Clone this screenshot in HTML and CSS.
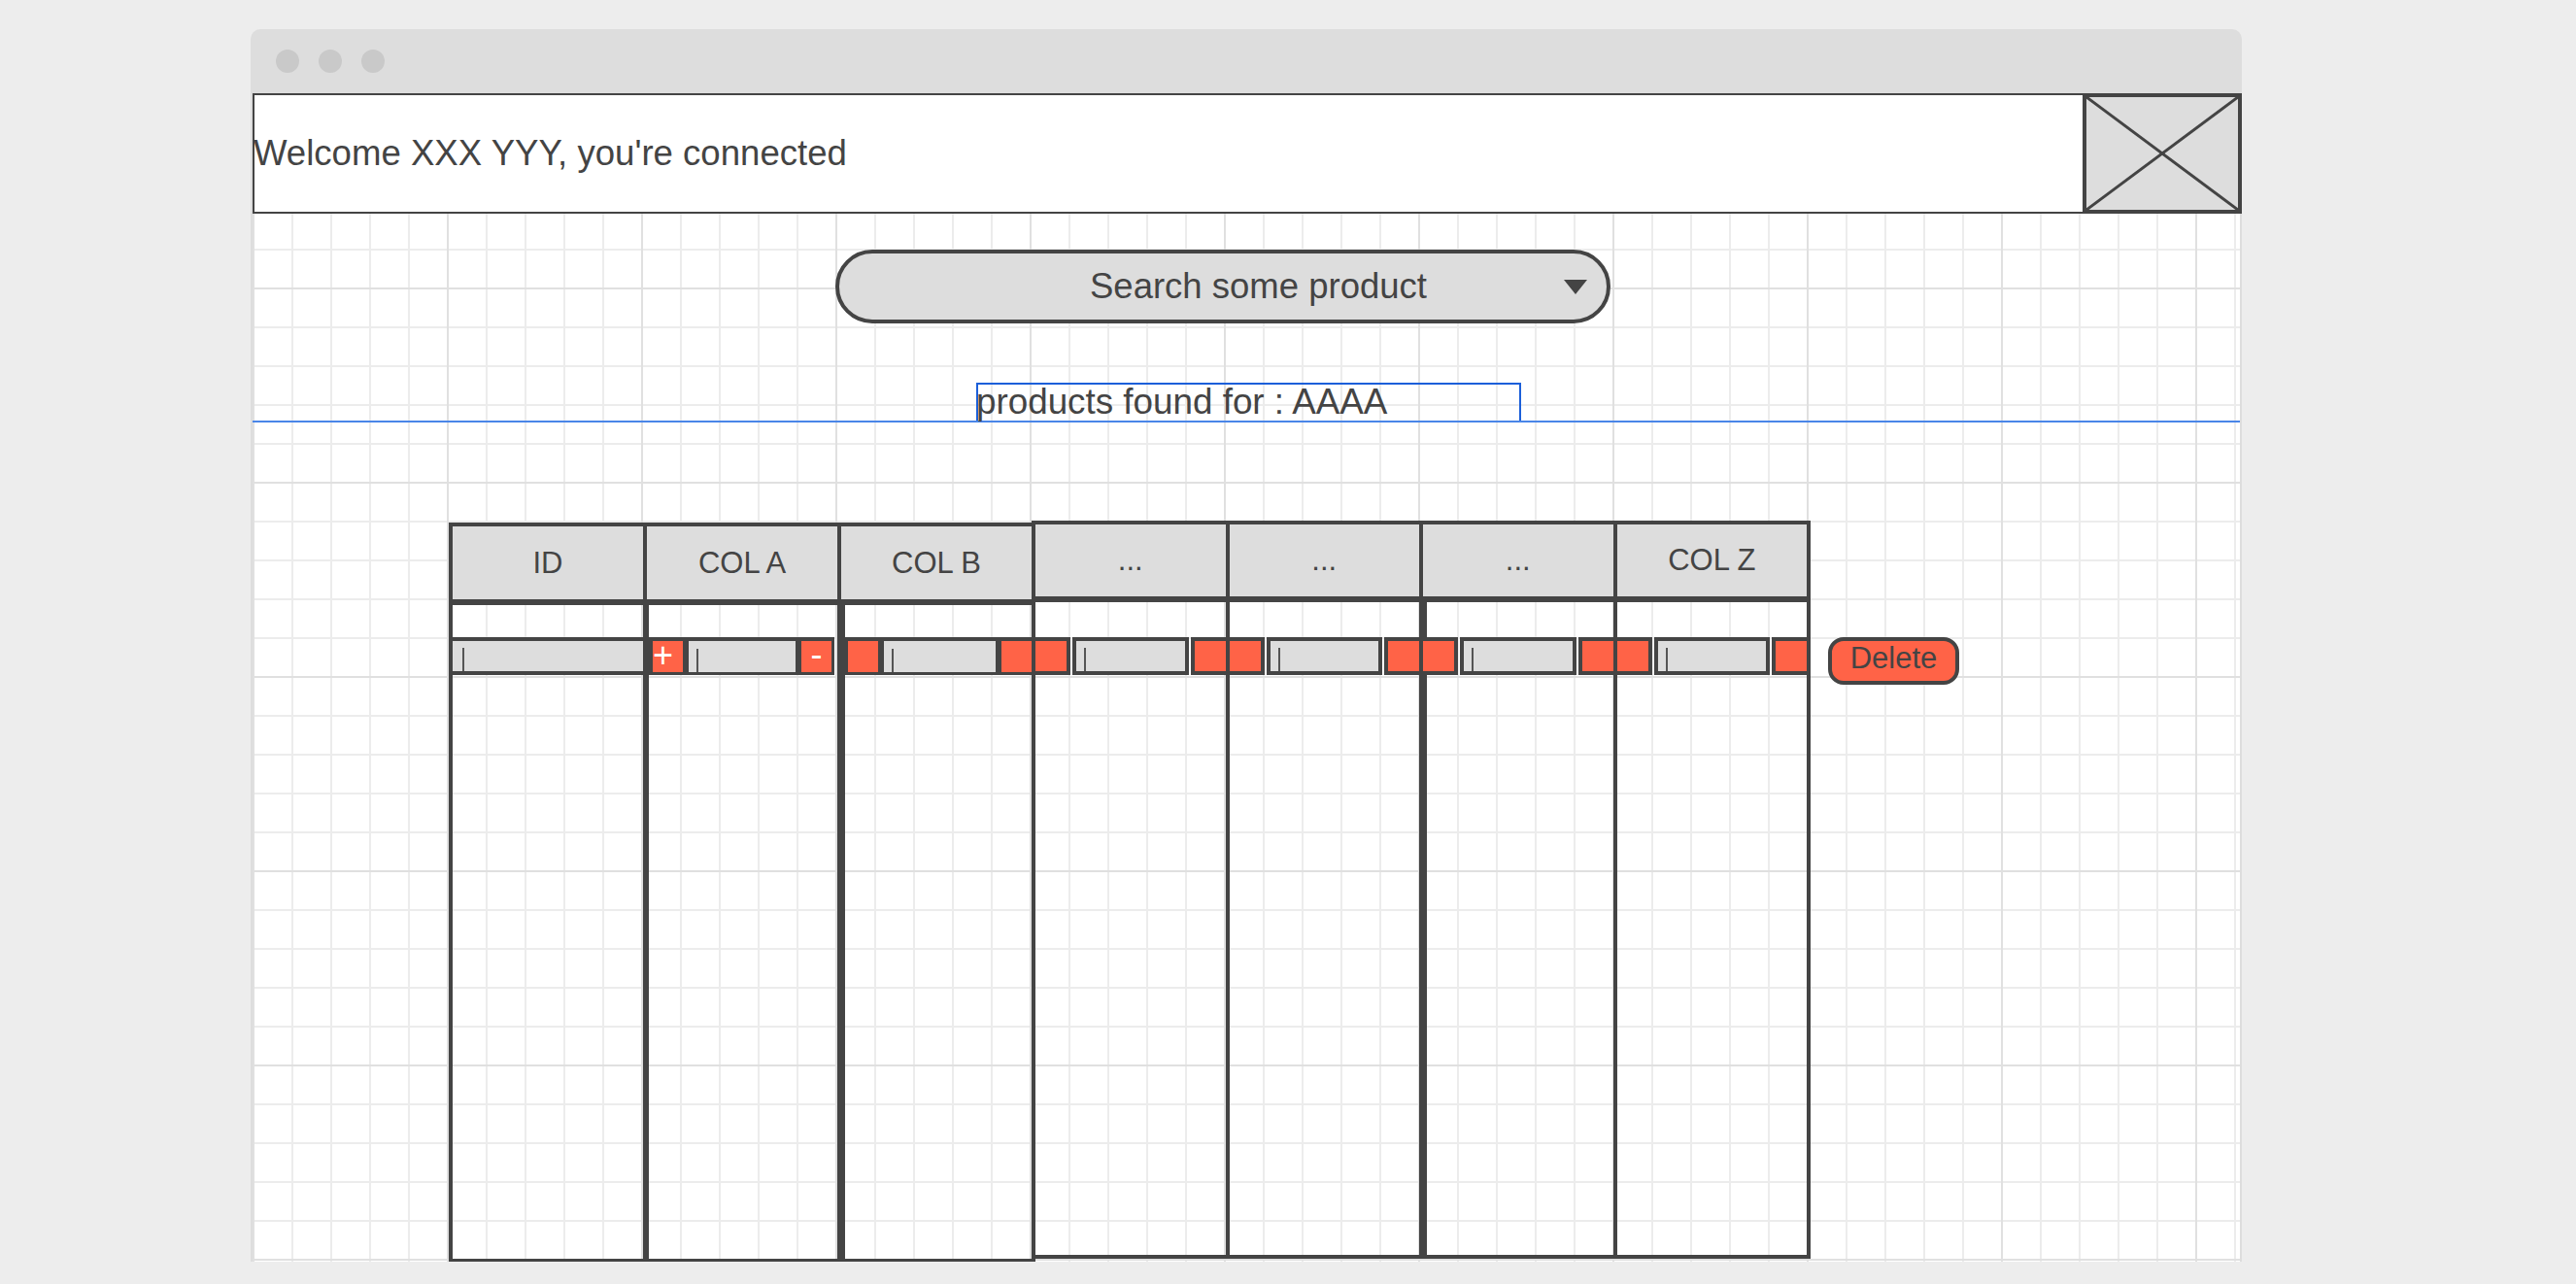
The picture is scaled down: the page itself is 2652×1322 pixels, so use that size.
FILE: index.html
```html
<!DOCTYPE html>
<html>
<head>
<meta charset="utf-8">
<title>Products</title>
<link rel="stylesheet" href="styles.css">
</head>
<body>
<div class="window">
  <div class="titlebar">
    <span class="dot"></span><span class="dot"></span><span class="dot"></span>
  </div>
  <div class="canvas">
    <header class="topbar">
      <span class="welcome">Welcome XXX YYY, you're connected</span>
      <div class="placeholder">
        <svg viewBox="0 0 156 116" preserveAspectRatio="none"><line x1="0" y1="0" x2="156" y2="116"/><line x1="156" y1="0" x2="0" y2="116"/></svg>
      </div>
    </header>

    <div class="search">
      <span class="search-text">Search some product</span>
      <span class="caret-down"></span>
    </div>

    <div class="found-row">
      <div class="found">products found for : AAAA</div>
    </div>

    <div class="tables">
      <div class="table t1">
        <div class="col">
          <div class="th">ID</div>
          <div class="td"><div class="field"><span class="cursor"></span></div></div>
        </div>
        <div class="col shift2">
          <div class="th">COL A</div>
          <div class="td">
            <div class="stepper joined cola"><span class="btn plus">+</span><span class="inp"><span class="cursor"></span></span><span class="btn minus">-</span></div>
          </div>
        </div>
        <div class="col shift4">
          <div class="th">COL B</div>
          <div class="td">
            <div class="stepper joined colb"><span class="btn"></span><span class="inp"><span class="cursor"></span></span><span class="btn"></span></div>
          </div>
        </div>
      </div>

      <div class="table t2">
        <div class="col">
          <div class="th">...</div>
          <div class="td"><div class="stepper split"><span class="btn"></span><span class="inp"><span class="cursor"></span></span><span class="btn"></span></div></div>
        </div>
        <div class="col">
          <div class="th">...</div>
          <div class="td"><div class="stepper split"><span class="btn"></span><span class="inp"><span class="cursor"></span></span><span class="btn"></span></div></div>
        </div>
        <div class="col shift4">
          <div class="th">...</div>
          <div class="td"><div class="stepper split"><span class="btn"></span><span class="inp"><span class="cursor"></span></span><span class="btn"></span></div></div>
        </div>
        <div class="col">
          <div class="th">COL Z</div>
          <div class="td"><div class="stepper split"><span class="btn"></span><span class="inp"><span class="cursor"></span></span><span class="btn"></span></div></div>
        </div>
      </div>

      <div class="delete">Delete</div>
    </div>
  </div>
</div>
</body>
</html>
```

FILE: styles.css
```css
* { box-sizing: border-box; }

html, body {
  margin: 0;
  background: #ededed;
}

body {
  font-family: "Liberation Sans", Arial, sans-serif;
  color: #444;
}

.window {
  margin: 30px 0 0 258px;
  width: 2050px;
  height: 1269px;
  background: #dddddd;
  border-radius: 10px 10px 0 0;
  padding: 0 2px 2px 2px;
  display: flex;
  flex-direction: column;
}

.titlebar {
  height: 66px;
  flex: none;
  display: flex;
  align-items: center;
  gap: 20px;
  padding-left: 24px;
}

.dot {
  width: 24px;
  height: 24px;
  border-radius: 50%;
  background: #c9c9c9;
}

.canvas {
  flex: 1;
  background-color: #fff;
  background-image:
    linear-gradient(to right, #e0e0e0 2px, transparent 2px),
    linear-gradient(to bottom, #e0e0e0 2px, transparent 2px),
    linear-gradient(to right, #ececec 2px, transparent 2px),
    linear-gradient(to bottom, #ececec 2px, transparent 2px);
  background-size: 200px 200px, 200px 200px, 40px 40px, 40px 40px;
}

/* header */
.topbar {
  height: 124px;
  margin-right: -2px;
  border: 2px solid #444;
  border-right: 0;
  background: #fff;
  display: flex;
  align-items: center;
  justify-content: space-between;
  font-size: 36.6px;
}

.welcome {
  margin-left: -1px;
}

.placeholder {
  align-self: stretch;
  width: 164px;
  margin: -2px 0;
  border: 4px solid #444;
  background: #ddd;
}

.placeholder svg {
  display: block;
  width: 100%;
  height: 100%;
}

.placeholder line {
  stroke: #444;
  stroke-width: 3;
}

/* search */
.search {
  margin: 37px 0 0 600px;
  width: 798px;
  height: 76px;
  border: 4px solid #444;
  border-radius: 38px;
  background: #ddd;
  display: flex;
  align-items: center;
  padding: 0 20px 0 258px;
  font-size: 36.5px;
}

.caret-down {
  margin-left: auto;
  width: 0;
  height: 0;
  border-left: 12px solid transparent;
  border-right: 12px solid transparent;
  border-top: 15px solid #444;
}

/* found */
.found-row {
  margin-top: 61px;
  border-bottom: 2px solid #4a86e8;
}

.found {
  margin-left: 745px;
  width: 561px;
  height: 39px;
  border: 2px solid #1c5fd9;
  border-bottom: 0;
  font-size: 36.8px;
  line-height: 35px;
  text-indent: -2px;
  white-space: nowrap;
}

/* tables */
.tables {
  display: flex;
  align-items: flex-start;
  margin: 103px 0 0 202px;
}

.table {
  display: flex;
  border: 4px solid #444;
}

.t1 {
  width: 604px;
  height: 762px;
}

.t2 {
  width: 802px;
  height: 760px;
  margin-left: -4px;
  margin-top: -2px;
}

.col {
  flex: 1;
  min-width: 0;
  display: flex;
  flex-direction: column;
}

.col + .col {
  border-left: 4px solid #444;
}

.th {
  height: 81px;
  flex: none;
  background: #ddd;
  border-bottom: 6px solid #444;
  display: flex;
  align-items: center;
  justify-content: center;
  font-size: 31px;
}

.t2 .th {
  height: 80px;
}

.td {
  flex: 1;
  padding-top: 33px;
}

.t2 .td {
  padding-top: 36px;
}

.shift2 .td {
  box-shadow: inset 2px 0 #444;
}

.shift4 .td {
  box-shadow: inset 4px 0 #444;
}

.field {
  height: 39px;
  margin: 0 -4px;
  border: 4px solid #444;
  background: #ddd;
  display: flex;
  align-items: flex-end;
}

.cursor {
  width: 2px;
  height: 24px;
  margin-left: 10px;
  background: #555;
}

.stepper {
  height: 39px;
  display: flex;
}

.stepper .btn {
  background: #ff6347;
  color: #fff;
  font-size: 36px;
  display: flex;
  align-items: center;
  justify-content: center;
  line-height: 1;
}

.stepper .inp {
  flex: 1;
  min-width: 0;
  background: #ddd;
  display: flex;
  align-items: flex-end;
}

.stepper .inp .cursor {
  margin-left: 8px;
}

.stepper.joined {
  background: #444;
  padding: 4px 3px 3px 4px;
  gap: 6px;
}

.stepper.joined .btn {
  width: 31px;
}

.stepper.cola {
  margin: 0 3px 0 2px;
}

.stepper.colb {
  margin: 0 0 0 3px;
  padding-right: 0;
}

.btn.plus {
  justify-content: flex-start;
  padding-bottom: 2px;
}

.btn.minus {
  padding-bottom: 4px;
}

.stepper.split {
  margin: 0 -4px;
  gap: 2px;
}

.stepper.split .btn {
  width: 40px;
  border: 4px solid #444;
}

.stepper.split .inp {
  border: 4px solid #444;
}

/* delete */
.delete {
  margin: 118px 0 0 18px;
  width: 135px;
  height: 49px;
  border: 4px solid #444;
  border-radius: 16px;
  background: #ff6347;
  font-size: 31px;
  display: flex;
  align-items: center;
  justify-content: center;
  padding-bottom: 6px;
}
```
